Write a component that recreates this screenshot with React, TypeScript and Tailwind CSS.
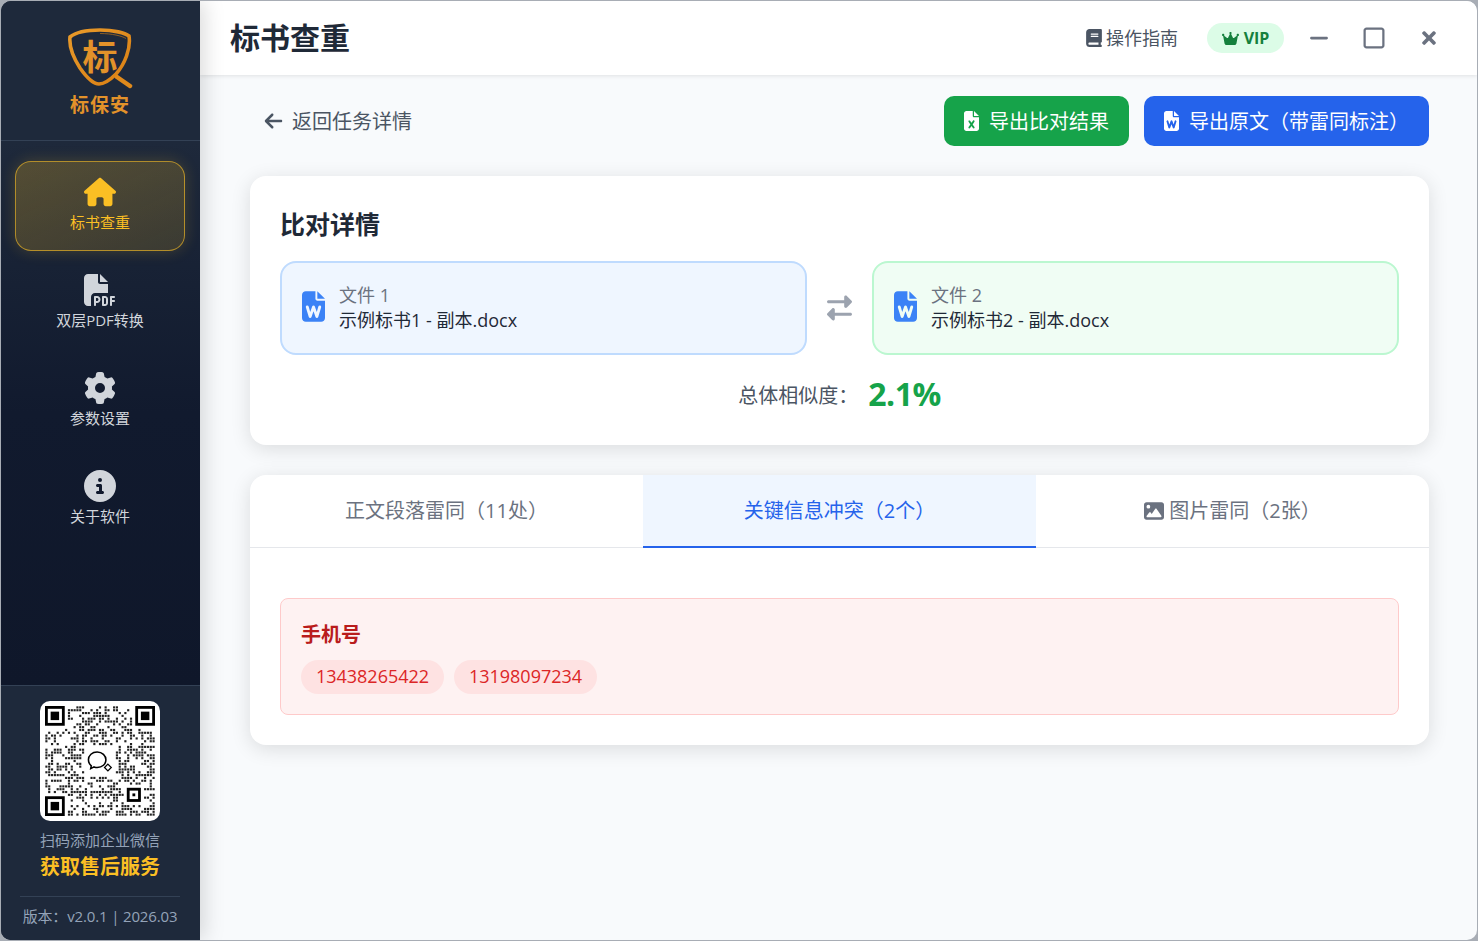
import React from "react";
import { FaHouse, FaFilePdf, FaGear, FaCircleInfo, FaBook, FaCrown, FaFileExcel, FaFileWord, FaRightLeft, FaArrowLeft, FaImage, FaMinus, FaRegSquare } from "react-icons/fa6";
import { FaTimes } from "react-icons/fa";

const FONT = "[font-family:'Open_Sans','Noto_Sans_CJK_SC',sans-serif]";

function Logo() {
  return (
    <div className="flex flex-col items-center">
      <svg width="66" height="62" viewBox="0 0 66 62" fill="none">
        <defs>
          <linearGradient id="g" x1="0" y1="0" x2="1" y2="1">
            <stop offset="0" stopColor="#e89a2a" />
            <stop offset="1" stopColor="#d97f14" />
          </linearGradient>
        </defs>
        <path d="M33 2C47 2 58 5 62 8C64 20 58 36 49 46C42 53 37 56 32 56C27 56 20 50 13 40C6 29 2 18 3 9C9 4 20 2 33 2Z" stroke="url(#g)" strokeWidth="3.6" />
        <path d="M33 5.5C45 5.5 55 8 59 10.5" stroke="#b9741c" strokeWidth="0.7" />
        <path d="M50 49L63 58" stroke="#e08a1c" strokeWidth="4.5" strokeLinecap="round" />
        <text x="33" y="42" textAnchor="middle" fontSize="35" fontWeight="700" fill="#e3922a" fontFamily="'Noto Sans CJK SC',sans-serif">标</text>
      </svg>
      <div className="mt-[3px] text-[19px] leading-[24px] font-bold tracking-[1px] text-[#e3922a]">标保安</div>
    </div>
  );
}

function QR() {
  const n = 39;
  let seed = 73421;
  const rnd = () => {
    seed = (seed * 1664525 + 1013904223) % 4294967296;
    return seed / 4294967296;
  };
  const rects: React.ReactNode[] = [];
  const inFinder = (x: number, y: number) => (x < 8 && y < 8) || (x >= n - 8 && y < 8) || (x < 8 && y >= n - 8);
  const inCenter = (x: number, y: number) => x >= 14 && x <= 24 && y >= 14 && y <= 24;
  const inAlign = (x: number, y: number) => x >= 28 && x <= 34 && y >= 28 && y <= 34;
  for (let y = 0; y < n; y++)
    for (let x = 0; x < n; x++) {
      if (inFinder(x, y) || inCenter(x, y) || inAlign(x, y)) continue;
      if (rnd() < 0.48) rects.push(<rect key={x + "-" + y} x={x + 0.12} y={y + 0.12} width="0.76" height="0.76" fill="#222" />);
    }
  const finder = (x: number, y: number) => (
    <g key={x + "f" + y}>
      <rect x={x} y={y} width="7" height="7" fill="#000" />
      <rect x={x + 1} y={y + 1} width="5" height="5" fill="#fff" />
      <rect x={x + 2} y={y + 2} width="3" height="3" fill="#000" />
    </g>
  );
  return (
    <div className="flex h-[120px] w-[120px] items-center justify-center rounded-[10px] bg-white">
      <svg width="110" height="110" viewBox="0 0 39 39">
        {rects}
        {finder(0, 0)}
        {finder(32, 0)}
        {finder(0, 32)}
        <rect x="29" y="29" width="5" height="5" fill="#000" />
        <rect x="30" y="30" width="3" height="3" fill="#fff" />
        <rect x="31" y="31" width="1" height="1" fill="#000" />
        <path d="M18.5 16.3c-1.8 0-3.1 1.2-3.1 2.8 0 .9.4 1.6 1 2.1l-.2 1 1.2-.6c.3.1.7.2 1.1.2 1.8 0 3.1-1.2 3.1-2.7s-1.3-2.8-3.1-2.8z" fill="none" stroke="#000" strokeWidth="0.55" />
        <path d="M22.3 20.6l1.2 1.2-1.2 1.2-1.2-1.2z" fill="none" stroke="#000" strokeWidth="0.45" />
      </svg>
    </div>
  );
}

function NavItem({ icon, label, active }: { icon: React.ReactNode; label: string; active?: boolean }) {
  return (
    <div
      className={
        active
          ? "flex h-[90px] flex-col items-center justify-center gap-[3px] rounded-2xl border border-[#fbbf24]/60 bg-gradient-to-br from-[#fbbf24]/25 to-[#fbbf24]/15 pb-[6px] text-[#fbbf24] shadow-[0_0_15px_rgba(251,191,36,0.2)]"
          : "flex h-[90px] flex-col items-center justify-center gap-[3px] rounded-2xl pb-[6px] text-[#d1d5db]"
      }
    >
      <div className="flex h-[34px] items-center justify-center text-[32px]">{icon}</div>
      <div className="text-[15px] leading-[20px]">{label}</div>
    </div>
  );
}

function FileBox({ label, name, green }: { label: string; name: string; green?: boolean }) {
  return (
    <div
      className={
        green
          ? "flex h-[94px] flex-1 items-center gap-[14px] rounded-2xl border-2 border-[#bbf7d0] bg-[#f0fdf4] px-5"
          : "flex h-[94px] flex-1 items-center gap-[14px] rounded-2xl border-2 border-[#bfdbfe] bg-[#eff6ff] px-5"
      }
    >
      <FaFileWord className="mb-[3px] h-[31px] w-[23px] text-[#3b82f6]" />
      <div>
        <div className="text-[18px] leading-[25px] text-[#6b7280]">{label}</div>
        <div className="text-[18px] leading-[25px] text-[#1f2937]">{name}</div>
      </div>
    </div>
  );
}

export default function App() {
  return (
    <div className={`h-[941px] w-full overflow-hidden bg-[#a8adb5] p-px ${FONT}`}>
      <div className="flex h-full w-full overflow-hidden rounded-[10px]">
        <aside className="relative z-10 flex w-[199px] shrink-0 flex-col bg-gradient-to-b from-[#1e293b] to-[#0f172a] shadow-[4px_0_20px_rgba(0,0,0,0.15)]">
          <div className="flex h-[140px] shrink-0 items-start justify-center border-b border-[#334155] bg-[#1e293b] pt-[27px] pr-px">
            <Logo />
          </div>
          <nav className="flex flex-1 flex-col gap-2 bg-gradient-to-b from-[#1e293b] via-[#111a2e] to-[#0f172a] pt-5 pr-[15px] pl-[14px]">
            <NavItem active icon={<FaHouse />} label="标书查重" />
            <NavItem icon={<FaFilePdf />} label="双层PDF转换" />
            <NavItem icon={<FaGear />} label="参数设置" />
            <NavItem icon={<FaCircleInfo />} label="关于软件" />
          </nav>
          <div className="flex h-[255px] shrink-0 flex-col items-center border-t border-[#334155] bg-[#1e293b] pt-[15px] pr-px">
            <QR />
            <div className="mt-[9px] text-[15px] leading-[20px] text-[#94a3b8]">扫码添加企业微信</div>
            <div className="mt-[3px] text-[20px] leading-[28px] font-bold text-[#fbbf24]">获取售后服务</div>
            <div className="mt-[15px] w-[160px] border-t border-[#334155] pt-[9px] text-center text-[15px] leading-[20px] tracking-[-0.15px] whitespace-nowrap text-[#94a3b8]">
              版本：v2.0.1 | 2026.03
            </div>
          </div>
        </aside>
        <main className="flex min-w-0 flex-1 flex-col bg-[#f8fafc]">
          <header className="flex h-[74px] shrink-0 items-center justify-between bg-white pr-[40px] pl-[30px] shadow-[0_1px_4px_rgba(0,0,0,0.1)]">
            <h1 className="text-[30px] leading-[40px] font-bold text-[#1f2937]">标书查重</h1>
            <div className="flex items-center">
              <div className="flex items-center gap-[4px] text-[18px] text-[#4b5563]">
                <FaBook className="h-[18px] w-4" />
                <span>操作指南</span>
              </div>
              <div className="ml-[29px] flex h-[30px] w-[77px] items-center justify-center gap-[5px] rounded-full bg-[#dcfce7] text-[16px] font-bold text-[#15803d]">
                <FaCrown className="text-[17px]" />
                <span>VIP</span>
              </div>
              <FaMinus className="ml-[24px] h-[22px] w-[22px] text-[#6b7280]" />
              <FaRegSquare className="ml-[33px] h-[24px] w-[22px] text-[#6b7280]" />
              <FaTimes className="ml-[36px] h-[20px] w-[16px] text-[#6b7280]" />
            </div>
          </header>
          <div className="flex flex-1 flex-col pt-[21px] pr-[48px] pl-[50px]">
            <div className="flex items-center justify-between">
              <div className="flex items-center gap-[9px] pl-[14px] text-[20px] text-[#4b5563]">
                <FaArrowLeft className="h-5 w-[19px]" />
                <span className="pt-[2px]">返回任务详情</span>
              </div>
              <div className="flex gap-[15px]">
                <div className="flex h-[50px] w-[185px] items-center justify-center gap-[10px] rounded-[10px] bg-[#16a34a] text-[20px] text-white">
                  <FaFileExcel className="h-5 w-[15px]" />
                  <span className="pt-[2px]">导出比对结果</span>
                </div>
                <div className="flex h-[50px] w-[285px] items-center justify-center gap-[10px] rounded-[10px] bg-[#2563eb] text-[20px] text-white">
                  <FaFileWord className="h-5 w-[15px]" />
                  <span className="pt-[2px]">导出原文（带雷同标注）</span>
                </div>
              </div>
            </div>
            <section className="mt-[30px] h-[269px] rounded-2xl bg-white p-[30px] shadow-[0_4px_20px_rgba(0,0,0,0.12)]">
              <h2 className="text-[25px] leading-[36px] font-bold text-[#1f2937]">比对详情</h2>
              <div className="mt-[19px] flex items-center gap-5">
                <FileBox label="文件 1" name="示例标书1 - 副本.docx" />
                <FaRightLeft className="h-[26px] w-[25px] shrink-0 text-[#9ca3af]" />
                <FileBox green label="文件 2" name="示例标书2 - 副本.docx" />
              </div>
              <div className="mt-[17px] flex items-center justify-center gap-[10px]">
                <span className="pt-[3px] text-[20px] text-[#4b5563]">总体相似度：</span>
                <span className="text-[32px] leading-[44px] font-bold tracking-[-0.5px] text-[#16a34a]">2.1%</span>
              </div>
            </section>
            <section className="mt-[30px] h-[270px] overflow-hidden rounded-2xl bg-white shadow-[0_4px_20px_rgba(0,0,0,0.12)]">
              <div className="grid h-[73px] grid-cols-3 border-b border-[#e5e7eb] text-[20px]">
                <div className="flex items-center justify-center text-[#6b7280]">正文段落雷同（11处）</div>
                <div className="-mb-px flex items-center justify-center border-b-2 border-[#2563eb] bg-[#eff6ff] text-[#2563eb]">关键信息冲突（2个）</div>
                <div className="flex items-center justify-center gap-[5px] text-[#6b7280]">
                  <FaImage className="h-5 w-5" />
                  <span>图片雷同（2张）</span>
                </div>
              </div>
              <div className="px-[30px] pt-[50px]">
                <div className="h-[117px] rounded-lg border border-[#fecaca] bg-[#fef2f2] px-5 pt-[21px]">
                  <div className="text-[20px] leading-[30px] font-bold text-[#b91c1c]">手机号</div>
                  <div className="mt-[10px] flex gap-[10px]">
                    <span className="flex h-[34px] w-[143px] items-center justify-center rounded-full bg-[#fee2e2] pb-[2px] text-[18px] text-[#dc2626]">13438265422</span>
                    <span className="flex h-[34px] w-[143px] items-center justify-center rounded-full bg-[#fee2e2] pb-[2px] text-[18px] text-[#dc2626]">13198097234</span>
                  </div>
                </div>
              </div>
            </section>
          </div>
        </main>
      </div>
    </div>
  );
}
